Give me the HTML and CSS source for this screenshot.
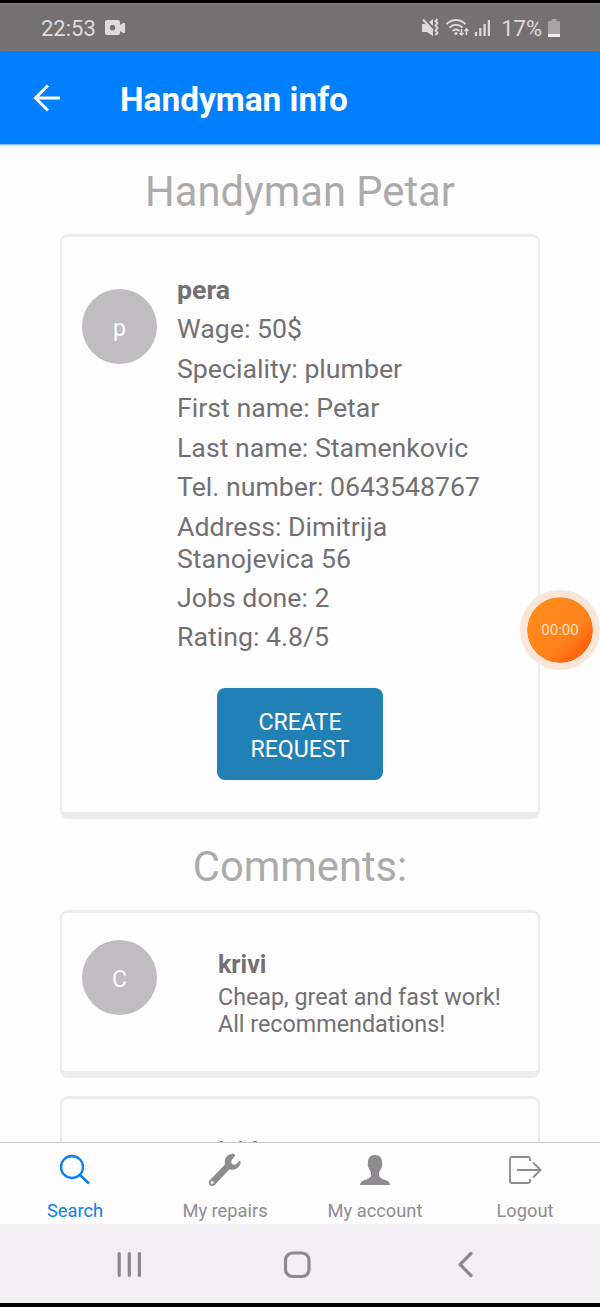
FILE: index.html
```html
<!DOCTYPE html>
<html lang="en">
<head>
<meta charset="utf-8">
<title>Handyman info</title>
<link rel="stylesheet" href="styles.css">
</head>
<body>
<div class="phone">
  <div class="status">
    <span class="clock">22:53</span>
    <svg class="cam" width="21" height="16" viewBox="0 0 21 16"><path fill="#dddbdd" fill-rule="evenodd" d="M2 0h11q2 0 2 2v3l3.500-2H20v10h-1.500L15 11v2q0 2-2 2H2q-2 0-2-2V2q0-2 2-2zM7.500 5a2.700 2.700 0 1 0 0 5.400a2.700 2.700 0 1 0 0-5.400z"/></svg>
    <svg class="signals" width="72" height="20" viewBox="0 0 72 20" fill="none" stroke="#dddbdd" stroke-width="1.900">
      <path fill="#dddbdd" stroke="none" d="M1 6h4l7 7v5l-6-4H1zM8 4l4-3v7z"/>
      <path d="M2 1.500l10 11M16.500 1l-2 2 2 2-2 2.500 2 2.500-2 2.500 2 2.500-2 2"/>
      <path d="M25.500 6q9.500-8 19 0M28.500 9.500q6.500-5.500 13 0M31.500 13q3.500-3 7 0"/>
      <circle cx="35" cy="15.500" r="1.500" fill="#dddbdd" stroke="none"/>
      <path stroke-width="1.500" d="M40.500 11v6M38.500 15l2 2 2-2M45.500 17v-6M43.500 13l2-2 2 2"/>
      <path stroke-width="2.200" d="M55 18v-4M59.300 18v-8M63.600 18V6M67.900 18V2"/>
    </svg>
    <span class="percent">17%</span>
    <svg class="battery" width="12" height="18" viewBox="0 0 12 18"><path fill="#a7a5a7" d="M1 2h2.500V0h5v2H11l1 1v15H0V3z"/><path fill="#efedef" d="M0 15h12v3H0z"/></svg>
  </div>
  <header class="bar">
    <svg width="28" height="28" viewBox="0 0 28 28" fill="none" stroke="#fff" stroke-width="3"><path d="M27 14H2M15 1.500L2.500 14 15 26.500"/></svg>
    <h1>Handyman info</h1>
  </header>
  <main class="content">
    <h2>Handyman Petar</h2>
    <section class="card profile">
      <div class="row">
        <div class="avatar">p</div>
        <div class="details">
          <p class="name">pera</p>
          <p>Wage: 50$</p>
          <p>Speciality: plumber</p>
          <p>First name: Petar</p>
          <p>Last name: Stamenkovic</p>
          <p>Tel. number: 0643548767</p>
          <p>Address: Dimitrija<br>Stanojevica 56</p>
          <p>Jobs done: 2</p>
          <p>Rating: 4.8/5</p>
        </div>
      </div>
      <button class="create">CREATE<br>REQUEST</button>
    </section>
    <h2 class="second">Comments:</h2>
    <section class="card comment">
      <div class="avatar">C</div>
      <div class="words">
        <p class="name">krivi</p>
        <p>Cheap, great and fast work!<br>All recommendations!</p>
      </div>
    </section>
    <section class="card comment next">
      <div class="words"><p class="name">ivid</p></div>
    </section>
  </main>
  <nav class="tabs">
    <a class="tab active"><svg width="34" height="34" viewBox="0 0 34 34" fill="none" stroke="currentColor"><circle cx="14" cy="14" r="11" stroke-width="2.300"/><path stroke-width="2.600" d="M22 22l9 8.500"/></svg><span>Search</span></a>
    <a class="tab"><svg width="34" height="34" viewBox="0 0 34 34"><path fill="currentColor" fill-rule="evenodd" d="M25 .8c-5 0-8.500 4-8.200 8.200.1 1.600.2 2.400-.5 3.300L1.800 27.200c-1.500 1.600-1.200 3.800.1 5 1.300 1.200 3.500 1.200 4.800-.2L20.300 17.500c.9-.9 1.800-1 3.300-.8 5 .4 9.200-3.300 9-8.100 0-1-.8-1.300-1.500-.5l-2.800 2.800c-1.700 1.300-3.900.8-4.700-.7-.7-1.200-.4-2.500.5-3.700l2.500-3.100c.9-1 .5-2.500-1.600-2.600zM4.200 28a1.500 1.500 0 1 1 0 3a1.500 1.500 0 1 1 0-3z"/></svg><span>My repairs</span></a>
    <a class="tab"><svg width="34" height="34" viewBox="0 0 34 34"><path fill="currentColor" d="M17 2c-5 0-7.300 3-7 8 0 .8-.5 1.300-.2 2.500.2 1.500 1 2.400 1.400 3.500.5 1.600 1.500 2.700 1.800 4v2.500c-.5 3-4 3.500-7 4.700C3.500 28.200 2 29.600 2 32h30c0-2.400-1.500-3.800-4-4.800-3-1.200-6.500-1.700-7-4.700V20c.3-1.300 1.300-2.400 1.800-4 .4-1.100 1.200-2 1.400-3.500.3-1.200-.2-1.700-.2-2.500.3-5-2-8-7-8z"/></svg><span>My account</span></a>
    <a class="tab"><svg width="34" height="34" viewBox="0 0 34 34" fill="none" stroke="currentColor" stroke-width="1.900"><path d="M22 8V6q0-2-2-2H4Q2 4 2 6v22q0 2 2 2h16q2 0 2-2v-2M9 17h22M25 9.500l7.500 7.500-7.500 7.500"/></svg><span>Logout</span></a>
  </nav>
  <div class="sysnav">
    <svg width="600" height="79" viewBox="0 0 600 79" fill="none" stroke="#8b898b" stroke-width="3.200" stroke-linecap="round" stroke-linejoin="round">
      <path d="M119.200 29.500v22M129.300 29.500v22M139.400 29.500v22"/>
      <rect x="285.500" y="29" width="23.500" height="23.500" rx="7"/>
      <path d="M471 29.500L460 40.500l11 11"/>
    </svg>
  </div>
  <div class="recorder"><span>00:00</span></div>
</div>
</body>
</html>
```
FILE: styles.css
```css
* { box-sizing: border-box; }
body { margin: 0; font-family: Roboto, sans-serif; background: #fefdfe; }
h1, h2, p { margin: 0; }
svg { display: block; flex: none; }
.phone { position: relative; width: 600px; height: 1307px; display: flex; flex-direction: column; overflow: hidden; border-top: 3px solid #000; border-bottom: 4px solid #000; color: #727072; }
.status { height: 48px; flex: none; display: flex; align-items: center; background: #747173; border-top: 1px solid #8a888a; color: #dddbdd; font-size: 22px; padding: 2px 40px 0 41px; }
.clock { width: 64px; }
.cam { margin-top: -2px; }
.signals { margin-left: auto; margin-right: 8px; margin-top: -2px; }
.battery { margin-left: 6px; margin-top: -2px; }
.bar { height: 94px; flex: none; display: flex; align-items: center; gap: 59px; padding-left: 33px; background: #007fff; border-bottom: 1px solid #7dc0fa; box-shadow: 0 1px 2px #ddd; color: #fff; }
.bar h1 { font-size: 33.400px; font-weight: 700; line-height: 40px; padding-top: 4px; }
.content { flex: 1; min-height: 0; overflow: hidden; }
h2 { height: 89px; padding-top: 22px; text-align: center; font-size: 41.700px; line-height: 50px; font-weight: 400; color: #acabac; }
h2.second { height: 90px; }
.card { width: 480px; margin: 0 auto; border: solid #edebee; border-width: 3px 2px 7px; border-radius: 8px; }
.profile { height: 585px; padding-top: 38px; }
.profile + .second { height: 91px; padding-top: 23px; }
.row { display: flex; }
.avatar { flex: none; width: 75px; height: 75px; border-radius: 50%; background: #bfbdbf; color: #fff; display: flex; align-items: center; justify-content: center; font-size: 23px; padding-top: 4px; margin-left: 20px; }
.profile .avatar { margin-top: 13.500px; }
.details { margin-left: 20px; font-size: 26.700px; line-height: 31.600px; }
.details p { margin-bottom: 7.900px; }
.name { font-weight: 700; }
.create { display: block; width: 166px; height: 92px; margin: 26px auto 0; padding: 4px 0 0; border: 0; border-radius: 8px; background: #2181b7; color: #fff; font: 23.200px/27px Roboto, sans-serif; }
.comment { height: 168px; margin-bottom: 18px; display: flex; padding-top: 27px; }
.words { margin-left: 61px; padding-top: 10px; font-size: 23.300px; line-height: 27px; }
.words .name { font-size: 25px; line-height: 30px; margin-bottom: 4px; }
.next .words { margin-left: 156px; padding-top: 11px; }
.tabs { flex: none; height: 82px; display: flex; border-top: 1px solid #c9c7ca; background: #fefdfe; }
.tab { flex: 1; display: flex; flex-direction: column; align-items: center; padding-top: 10px; color: #8e8c8f; font-size: 18.300px; line-height: 24px; }
.tab span { margin-top: 12px; }
.tab.active { color: #087ff3; }
.sysnav { flex: none; height: 79px; background: #f1eff2; }
.recorder { position: absolute; left: 520px; top: 587px; width: 80px; height: 80px; border: 7px solid #f9e6d8; border-radius: 50%; background: linear-gradient(135deg, #ff8c1c 20%, #ff811a 60%, #ff650e 75%) border-box; background-clip: padding-box; display: flex; align-items: center; justify-content: center; color: #ffe3c5; font-size: 15px; }
```
